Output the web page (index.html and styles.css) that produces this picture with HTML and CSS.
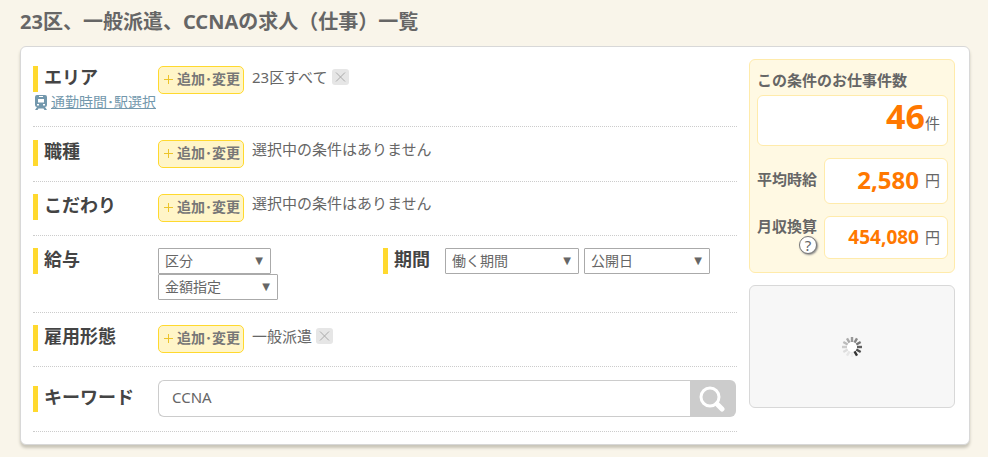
FILE: index.html
```html
<!DOCTYPE html>
<html lang="ja">
<head>
<meta charset="utf-8">
<meta name="viewport" content="width=device-width, initial-scale=1">
<title>23区、一般派遣、CCNAの求人（仕事）一覧</title>
<link rel="stylesheet" href="styles.css">
</head>
<body>
<h1 class="page-title">23区、一般派遣、CCNAの求人（仕事）一覧</h1>
<main class="panel">
  <form class="conditions">
    <section class="row row-area">
      <div class="label-cell">
        <h2 class="label">エリア</h2>
        <div class="commute">
          <svg class="train" viewBox="0 0 12 15" aria-hidden="true"><path fill="#7398ad" fill-rule="evenodd" d="M2 0h8Q12 0 12 2v8Q12 12 10 12L12 15H9.500L8.500 13.500H3.500L2.500 15H0L2 12Q0 12 0 10V2Q0 0 2 0ZM4 1v1h4V1ZM3 4v3.500h6V4ZM2 9v1.500h2V9ZM8 9v1.500h2V9Z"/></svg>
          <a class="link" href="#commute">通勤時間･駅選択</a>
        </div>
      </div>
      <div class="value">
        <button type="button" class="edit"><span class="plus"></span>追加･変更</button>
        <span class="text">23区すべて</span>
        <button type="button" class="remove" aria-label="削除"><svg viewBox="0 0 17 16"><path d="M4 3.500l9 9M13 3.500l-9 9"/></svg></button>
      </div>
    </section>
    <section class="row row-job">
      <h2 class="label">職種</h2>
      <div class="value">
        <button type="button" class="edit"><span class="plus"></span>追加･変更</button>
        <span class="text none">選択中の条件はありません</span>
      </div>
    </section>
    <section class="row">
      <h2 class="label">こだわり</h2>
      <div class="value">
        <button type="button" class="edit"><span class="plus"></span>追加･変更</button>
        <span class="text none">選択中の条件はありません</span>
      </div>
    </section>
    <section class="row row-pay">
      <h2 class="label">給与</h2>
      <div class="pay">
        <span class="select w-s"><select aria-label="区分"><option>区分</option></select></span>
        <span class="select w-m"><select aria-label="金額指定"><option>金額指定</option></select></span>
      </div>
      <h2 class="label">期間</h2>
      <div class="period">
        <span class="select w-l"><select aria-label="働く期間"><option>働く期間</option></select></span>
        <span class="select w-x"><select aria-label="公開日"><option>公開日</option></select></span>
      </div>
    </section>
    <section class="row">
      <h2 class="label">雇用形態</h2>
      <div class="value">
        <button type="button" class="edit"><span class="plus"></span>追加･変更</button>
        <span class="text">一般派遣</span>
        <button type="button" class="remove" aria-label="削除"><svg viewBox="0 0 17 16"><path d="M4 3.500l9 9M13 3.500l-9 9"/></svg></button>
      </div>
    </section>
    <section class="row row-keyword">
      <h2 class="label"><label for="keyword">キーワード</label></h2>
      <div class="search">
        <input id="keyword" type="text" value="CCNA">
        <button type="submit" aria-label="検索"><svg viewBox="0 0 26 26"><circle cx="11" cy="11" r="9" fill="none" stroke="#fff" stroke-width="3"/><path d="M18 18l5 5" stroke="#fff" stroke-width="5" stroke-linecap="round"/></svg></button>
      </div>
    </section>
  </form>
  <aside class="side">
    <section class="summary">
      <h2 class="summary-title">この条件のお仕事件数</h2>
      <p class="box count"><strong>46</strong>件</p>
      <div class="stat">
        <h3>平均時給</h3>
        <p class="box hourly"><strong>2,580</strong>円</p>
      </div>
      <div class="stat">
        <div class="monthly-label">
          <h3>月収換算</h3>
          <button type="button" class="help">?</button>
        </div>
        <p class="box monthly"><strong>454,080</strong>円</p>
      </div>
    </section>
    <div class="loading">
      <svg class="spinner" viewBox="-10 -10 20 20" stroke-width="2.400" aria-hidden="true">
        <circle r="5" fill="#fff"/>
        <path stroke="#999" d="M0-5V-10"/>
        <path stroke="#888" d="M0-5V-10" transform="rotate(30)"/>
        <path stroke="#777" d="M0-5V-10" transform="rotate(60)"/>
        <path stroke="#606060" d="M0-5V-10" transform="rotate(90)"/>
        <path stroke="#4c4c4c" d="M0-5V-10" transform="rotate(120)"/>
        <path stroke="#333" d="M0-5V-10" transform="rotate(150)"/>
        <path stroke="#eee" d="M0-5V-10" transform="rotate(180)"/>
        <path stroke="#e6e6e6" d="M0-5V-10" transform="rotate(210)"/>
        <path stroke="#ddd" d="M0-5V-10" transform="rotate(240)"/>
        <path stroke="#ccc" d="M0-5V-10" transform="rotate(270)"/>
        <path stroke="#bbb" d="M0-5V-10" transform="rotate(300)"/>
        <path stroke="#aaa" d="M0-5V-10" transform="rotate(330)"/>
      </svg>
    </div>
  </aside>
</main>
</body>
</html>
```
FILE: styles.css
```css
* { box-sizing: border-box; }
body {
  margin: 0;
  padding: 10px 18px 12px 20px;
  background: #f9f5ea;
  color: #666;
  font: 400 15px/24px "Noto Sans", "Noto Sans CJK JP", sans-serif;
}
h1, h2, h3, p { margin: 0; }
button, input, select { font: inherit; color: inherit; margin: 0; }
button { cursor: pointer; }
.page-title { font-size: 20px; line-height: 24px; font-weight: 700; margin-bottom: 12px; }

.panel {
  display: flex;
  align-items: flex-start;
  gap: 12px;
  padding: 12px 14px 12px 12px;
  background: #fff;
  border: 1px solid #d8d8d8;
  border-radius: 6px;
  box-shadow: 0 3px 3px #c9c5b9;
}
.conditions { flex: 1; min-width: 0; }

.row {
  display: grid;
  grid-template-columns: 125px 1fr;
  align-items: start;
  padding: 12px 0 13px;
  border-bottom: 1px dotted #ccc;
}
.row-area { padding: 7px 0 14px; }
.row-job { padding-top: 13px; }
.row-pay { grid-template-columns: 125px 225px 62px 1fr; padding-bottom: 12px; }
.row-keyword { padding: 13px 0 14px; }
.row-keyword .label { margin-top: 6px; }
.label {
  border-left: 5px solid #ffd92e;
  padding-left: 6px;
  height: 26px;
  font-size: 18px;
  line-height: 22px;
  font-weight: 700;
  color: #444;
}
.commute { display: flex; align-items: center; gap: 4px; padding-left: 2px; line-height: 20px; }
.train { width: 12px; height: 15px; flex: none; }
.link { font-size: 14px; color: #7398ad; white-space: nowrap; }
.value { display: flex; align-items: flex-start; }
.edit {
  display: flex;
  align-items: center;
  gap: 3px;
  width: 86px;
  height: 28px;
  margin-right: 8px;
  padding: 0 0 2px 4px;
  border: 1px solid #ffd92e;
  border-radius: 5px;
  background: #fff5c8;
  font-size: 14px;
  line-height: 24px;
  font-weight: 700;
  color: #777;
  white-space: nowrap;
}
.plus {
  flex: none;
  width: 11px;
  height: 11px;
  background:
    linear-gradient(#ecc42a, #ecc42a) center / 9px 1px no-repeat,
    linear-gradient(#ecc42a, #ecc42a) center / 1px 9px no-repeat;
}
.text { line-height: 22px; }
.none { line-height: 18px; }
.remove { width: 17px; height: 16px; margin: 3px 0 0 4px; padding: 0; border: 0; border-radius: 3px; background: #e6e6e6; }
.remove svg { display: block; stroke: #aaa; }

.pay { display: flex; flex-direction: column; }
.period { display: flex; gap: 5px; }
.select { position: relative; display: block; height: 26px; }
.select::after {
  content: "▼";
  position: absolute;
  right: 8px;
  top: 0;
  font: 10px/26px "DejaVu Sans", sans-serif;
  pointer-events: none;
}
.select select {
  appearance: none;
  width: 100%;
  height: 100%;
  padding: 0 20px 1px 6px;
  border: 1px solid #aaa;
  border-radius: 1px;
  background: #fff;
  font-size: 14px;
}
.w-s { width: 113px; }
.w-m { width: 120px; }
.w-l { width: 134px; }
.w-x { width: 126px; }

.search { display: flex; height: 37px; margin-right: 1px; }
.search input {
  flex: 1;
  min-width: 0;
  padding: 0 13px 3px;
  border: 1px solid #ccc;
  border-right: 0;
  border-radius: 6px 0 0 6px;
  background: #fff;
}
.search button { width: 46px; padding: 0 0 0 9px; border: 0; border-radius: 0 6px 6px 0; background: #ccc; }
.search svg { display: block; width: 26px; height: 26px; }

.side { width: 206px; flex: none; }
.summary { padding: 8px 6px 13px 7px; border: 1px solid #ffebab; border-radius: 6px; background: #fff9e3; }
.summary-title { font-size: 15px; line-height: 24px; font-weight: 700; margin-bottom: 3px; }
.box {
  display: flex;
  align-items: center;
  justify-content: flex-end;
  padding: 0 7px 2px;
  border: 1px solid #ffebab;
  border-radius: 6px;
  background: #fff;
}
.box strong { font-weight: 700; color: #ff7800; }
.count { align-items: baseline; height: 51px; line-height: 40px; }
.count strong { font-size: 34px; }
.stat { display: flex; justify-content: space-between; margin-top: 12px; }
.stat h3 { font-size: 15px; line-height: 20px; font-weight: 700; }
.stat > h3 { margin-top: 11px; }
.stat .box { width: 124px; gap: 6px; }
.hourly { height: 46px; }
.hourly strong { font-size: 24px; }
.monthly { height: 43px; }
.monthly strong { font-size: 19px; }
.help {
  display: block;
  width: 18px;
  height: 18px;
  margin-left: auto;
  padding: 0;
  border: 1px solid #777;
  border-radius: 50%;
  background: #fff;
  box-shadow: 1px 1px 2px #888;
  line-height: 14px;
}
.loading {
  display: flex;
  align-items: center;
  justify-content: center;
  height: 123px;
  margin-top: 12px;
  border: 1px solid #d8d8d8;
  border-radius: 6px;
  background: #f7f7f7;
}
.spinner { width: 20px; height: 20px; }
```
